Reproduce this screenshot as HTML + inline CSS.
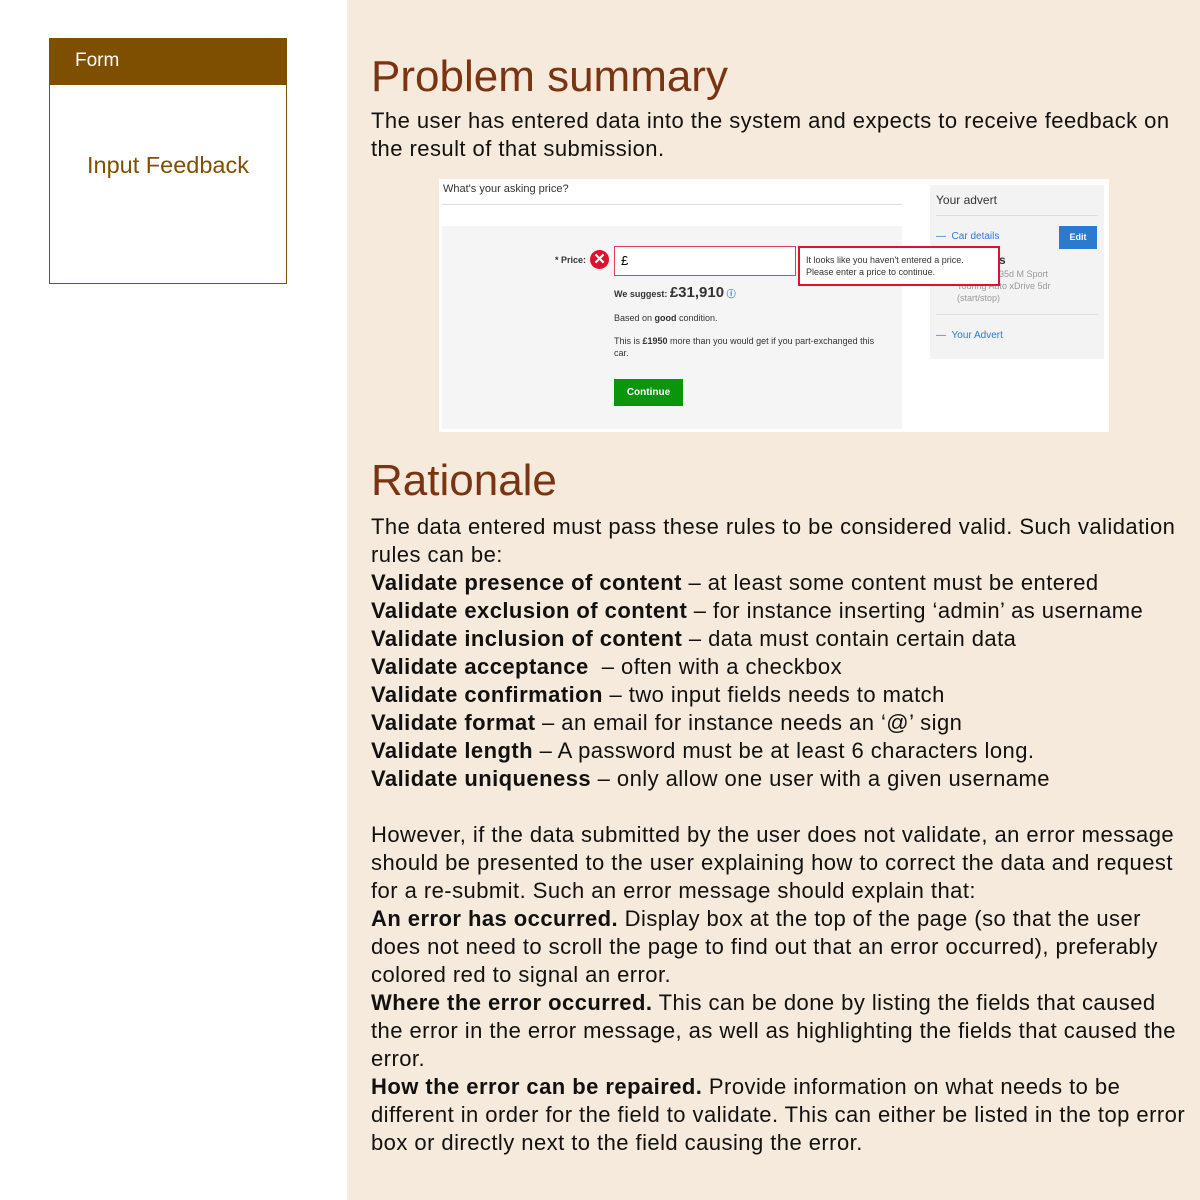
<!DOCTYPE html>
<html><head><meta charset="utf-8"><style>
*{margin:0;padding:0;box-sizing:border-box}
body{width:1200px;height:1200px;background:#fff;font-family:"Liberation Sans",sans-serif;position:relative;overflow:hidden}
.a{position:absolute}
#right{left:347px;top:0;width:853px;height:1200px;background:#f5eadb}
#card{left:49px;top:38px;width:238px;height:246px;border:1px solid #7f4f00;background:#fff}
#card .h{height:46px;background:#7f4f00;color:#fff;font-size:19px;padding:11px 0 0 25px}
#card .t{position:absolute;top:113px;left:0;width:100%;text-align:center;color:#7f4f00;font-size:23.5px}
h1{position:absolute;font-weight:normal;color:#7a3412;font-size:44px;left:371px}
.txt{position:absolute;left:371px;width:815px;font-size:22px;line-height:28px;color:#111;letter-spacing:0.45px}
.s{position:absolute;font-size:10px;color:#333;white-space:nowrap}
</style></head><body>
<div class="a" id="right"></div>
<div class="a" id="card"><div class="h">Form</div><div class="t">Input Feedback</div></div>
<h1 style="top:52px">Problem summary</h1>
<div class="txt" style="top:107px">The user has entered data into the system and expects to receive feedback on the result of that submission.</div>

<div class="a" style="left:439px;top:179px;width:670px;height:253px;background:#fff">
 <div class="s" style="left:4px;top:4px;font-size:11px">What's your asking price?</div>
 <div class="a" style="left:3px;top:25px;width:460px;height:1px;background:#ddd"></div>
 <div class="a" style="left:3px;top:47px;width:460px;height:203px;background:#f5f5f5"></div>
 <div class="s" style="left:116px;top:76px;font-size:9px;font-weight:bold">* Price:</div>
 <div class="a" style="left:151px;top:71px;width:19px;height:19px;border-radius:50%;background:#e0102e;color:#fff;font-size:15px;font-weight:bold;text-align:center;line-height:19px">✕</div>
 <div class="a" style="left:175px;top:67px;width:182px;height:30px;border:1px solid #e0405a;background:#fff;font-size:13px;padding:6px 6px">£</div>
 <div class="s" style="left:175px;top:105px;font-size:9px;font-weight:bold">We suggest: <span style="font-size:15px">£31,910</span> <span style="color:#2a7bd0">ⓘ</span></div>
 <div class="s" style="left:175px;top:134px;font-size:9px">Based on <b>good</b> condition.</div>
 <div class="s" style="left:175px;top:156px;font-size:9px;line-height:12px">This is <b>£1950</b> more than you would get if you part-exchanged this<br>car.</div>
 <div class="a" style="left:175px;top:200px;width:69px;height:27px;background:#0a960a;color:#fff;font-size:10px;font-weight:bold;text-align:center;line-height:27px">Continue</div>
 <div class="a" style="left:491px;top:6px;width:174px;height:174px;background:#f3f3f3"></div>
 <div class="s" style="left:497px;top:14px;font-size:12px">Your advert</div>
 <div class="a" style="left:497px;top:36px;width:162px;height:1px;background:#ddd"></div>
 <div class="s" style="left:497px;top:52px;font-size:10px;color:#2a7bd0">—&nbsp;&nbsp;Car details</div>
 <div class="a" style="left:620px;top:47px;width:38px;height:23px;background:#2a7bd0;color:#fff;font-size:9px;font-weight:bold;text-align:center;line-height:23px">Edit</div>
 <div class="s" style="left:560px;top:74px;font-size:12px;font-weight:bold">s</div>
 <div class="s" style="left:518px;top:89px;font-size:9px;color:#999;line-height:12px">eries 3.0 335d M Sport<br>Touring Auto xDrive 5dr<br>(start/stop)</div>
 <div class="a" style="left:497px;top:135px;width:162px;height:1px;background:#ddd"></div>
 <div class="s" style="left:497px;top:151px;font-size:10px;color:#2a7bd0">—&nbsp;&nbsp;Your Advert</div>
 <div class="a" style="left:359px;top:67px;width:202px;height:40px;border:2px solid #e0102e;background:#fff"></div>
 <div class="s" style="left:367px;top:75px;font-size:9px;line-height:12px">It looks like you haven't entered a price.<br>Please enter a price to continue.</div>
</div>

<h1 style="top:456px">Rationale</h1>
<div class="txt" style="top:513px">The data entered must pass these rules to be considered valid. Such validation rules can be:<br>
<b>Validate presence of content</b> – at least some content must be entered<br>
<b>Validate exclusion of content</b> – for instance inserting ‘admin’ as username<br>
<b>Validate inclusion of content</b> – data must contain certain data<br>
<b>Validate acceptance</b>&nbsp; – often with a checkbox<br>
<b>Validate confirmation</b> – two input fields needs to match<br>
<b>Validate format</b> – an email for instance needs an ‘@’ sign<br>
<b>Validate length</b> – A password must be at least 6 characters long.<br>
<b>Validate uniqueness</b> – only allow one user with a given username<br><br>
However, if the data submitted by the user does not validate, an error message should be presented to the user explaining how to correct the data and request for a re-submit. Such an error message should explain that:<br>
<b>An error has occurred.</b> Display box at the top of the page (so that the user does not need to scroll the page to find out that an error occurred), preferably colored red to signal an error.<br>
<b>Where the error occurred.</b> This can be done by listing the fields that caused the error in the error message, as well as highlighting the fields that caused the error.<br>
<b>How the error can be repaired.</b> Provide information on what needs to be different in order for the field to validate. This can either be listed in the top error box or directly next to the field causing the error.
</div>
</body></html>
